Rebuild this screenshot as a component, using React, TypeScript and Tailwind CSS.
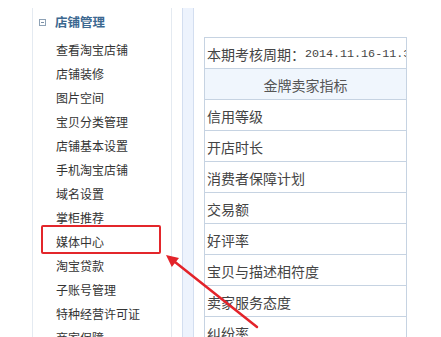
import React from "react";

const menuItems = [
  "查看淘宝店铺",
  "店铺装修",
  "图片空间",
  "宝贝分类管理",
  "店铺基本设置",
  "手机淘宝店铺",
  "域名设置",
  "掌柜推荐",
  "媒体中心",
  "淘宝贷款",
  "子账号管理",
  "特种经营许可证",
  "商家保障",
];

const indicators = [
  "信用等级",
  "开店时长",
  "消费者保障计划",
  "交易额",
  "好评率",
  "宝贝与描述相符度",
  "卖家服务态度",
  "纠纷率",
];

const App: React.FC = () => {
  return (
    <div className="relative w-[441px] h-[337px] overflow-hidden bg-white flex font-['Noto_Sans_CJK_SC','Liberation_Sans',sans-serif]">
      <div className="w-[32px] shrink-0" />

      {/* sidebar */}
      <div className="w-[140px] shrink-0 mt-[8px] pt-[2px] border-l border-r border-[#e4eaf1]">
        <div className="h-[24px] flex items-center pl-[6px]">
          <span className="w-[7px] h-[7px] border border-[#8ea2b6] flex items-center justify-center">
            <span className="w-[3px] h-px bg-[#7b90a6]" />
          </span>
          <span className="ml-[9px] text-[12.5px] font-bold text-[#3c6890] leading-none">
            店铺管理
          </span>
        </div>
        <div className="mt-[3px] flex flex-col">
          {menuItems.map((item) => (
            <div
              key={item}
              className="relative h-[24px] flex items-center pl-[23px] pt-[1px] text-[12px] text-[#333] whitespace-nowrap"
            >
              {item}
              {item === "媒体中心" && (
                <span className="absolute left-[8px] right-[10px] top-[-4px] bottom-[-1px] border-2 border-[#e3262b] rounded-[2px]" />
              )}
            </div>
          ))}
        </div>
      </div>

      {/* divider strip */}
      <div className="w-[12px] shrink-0 mt-[8px] ml-[10px] border-l border-r border-[#d3def0] bg-[#edf3fd]" />

      {/* content */}
      <div className="ml-[10px] w-[203px] shrink-0 mt-[9px] flex flex-col">
        <div className="ml-[1px] h-[5px] bg-[#fffbd3]" />
        <div className="mt-[28px] border-t border-l border-r border-[#c6d3e2] text-[14px] text-[#444]">
          <div className="h-[31px] border-b border-[#c6d3e2] flex items-center pl-[2px] pt-[3px] whitespace-nowrap overflow-hidden">
            本期考核周期：
            <span className="font-['Liberation_Mono',monospace] text-[11.7px] text-[#444]">
              2014.11.16-11.30
            </span>
          </div>
          <div className="h-[31px] border-b border-[#c6d3e2] bg-[#f0f6fd] flex items-center justify-center pt-[3px] text-[#555]">
            金牌卖家指标
          </div>
          {indicators.map((row) => (
            <div
              key={row}
              className="h-[31px] border-b border-[#c6d3e2] flex items-center pl-[2px] pt-[3px] whitespace-nowrap"
            >
              {row}
            </div>
          ))}
        </div>
      </div>

      {/* annotation arrow */}
      <svg
        className="absolute left-0 top-0 pointer-events-none"
        width="441"
        height="337"
        viewBox="0 0 441 337"
      >
        <line
          x1="175"
          y1="262"
          x2="257"
          y2="327"
          stroke="#e3232a"
          strokeWidth="2.5"
          strokeLinecap="round"
        />
        <polygon points="166,255 171.8,267 179,258" fill="#e3232a" />
      </svg>
    </div>
  );
};

export default App;
